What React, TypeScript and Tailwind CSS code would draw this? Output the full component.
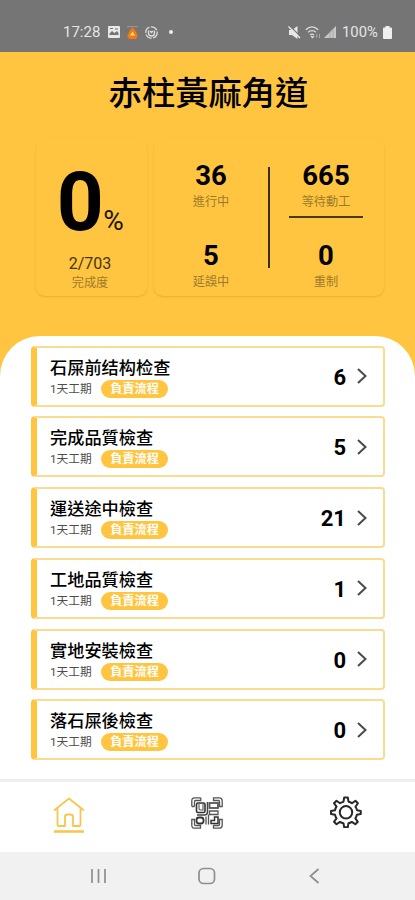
import React from "react";

interface InspectionItem {
  title: string;
  count: number;
}

const inspections: InspectionItem[] = [
  { title: "石屎前结构检查", count: 6 },
  { title: "完成品質檢查", count: 5 },
  { title: "運送途中檢查", count: 21 },
  { title: "工地品質檢查", count: 1 },
  { title: "實地安裝檢查", count: 0 },
  { title: "落石屎後檢查", count: 0 },
];

function StatusBar() {
  return (
    <div className="h-[52px] shrink-0 bg-[#757575] text-[#e4e4e4] flex justify-between pt-[12px] pl-[63px] pr-[23px]">
      <div className="flex items-center h-10 gap-[8px]">
        <span className="w-[37px] text-[15px] whitespace-nowrap">17:28</span>
        {/* Gallery */}
        <svg className="w-[12px] h-[12px]" viewBox="0 0 12 12">
          <rect width="12" height="12" rx="1" fill="#e8e8e8" />
          <path d="M1.5 9V7.5L4 5l2.5 2L9 5l1.5 2v2z" fill="#757575" />
          <path d="M2 2.5h3M7 3h3" stroke="#757575" strokeWidth="1" />
        </svg>
        {/* Orange app */}
        <svg className="w-[11px] h-[13px] -ml-px" viewBox="0 0 11 13">
          <path d="M0 .7h11" stroke="#a99a8c" />
          <path d="M5.5 1.5L8 4 10.7 10 9 13H2L.3 10 3 4z" fill="#f27a1a" />
          <path d="M5.5 5.5L8 9.5H3z" fill="#ffe35a" />
        </svg>
        <svg className="w-[13px] h-[13px] -ml-[1px]" viewBox="0 0 13 13" fill="none" stroke="#e0e0e0" strokeWidth="1.3">
          <circle cx="6.5" cy="6.5" r="5.7" strokeDasharray="7 1.5" />
          <path d="M3.5 4.5v2.5a3 3 0 0 0 6 0V4.5M5 5l1.5 1.5L8 5" />
        </svg>
        <span className="w-[4px] h-[4px] rounded-full bg-[#f1f1f1] ml-[3px]" />
      </div>
      <div className="flex items-center h-10">
        {/* Muted speaker */}
        <svg className="w-[13px] h-[13px]" viewBox="0 0 13 13">
          <path d="M1 4h3l5.5-4v13L4 9H1z" fill="#e8e8e8" />
          <path d="M2 0l11 11" stroke="#757575" strokeWidth="1.2" />
          <path d="M.5 .5l11.5 11.5" stroke="#e8e8e8" strokeWidth="1.4" />
        </svg>
        <svg className="w-[16px] h-[13px] ml-[4px]" viewBox="0 0 16 13" fill="none" stroke="#dcdcdc" strokeWidth="1.3">
          <path d="M.8 3.8Q7-2 13.2 3.8M3 6.3q4-3.3 8 0M5 8.8q2-1.5 4 0" />
          <path d="M6 10l1.5 1.5L9 10" />
          <path d="M11.8 8v4M14.5 8v4" stroke="#aaa" strokeWidth="1" />
        </svg>
        <svg className="w-[12px] h-[12px] ml-[3px]" viewBox="0 0 12 12">
          <path d="M12 0v12H0z" fill="#c8c8c8" />
          <path d="M9 3v9M6 6v6" stroke="#999" strokeWidth=".7" />
        </svg>
        <span className="ml-[6px] w-[37px] text-[14.8px] whitespace-nowrap">100%</span>
        <svg className="w-[9px] h-[13px] ml-[4px]" viewBox="0 0 9 13" fill="#f0f0f0">
          <rect x="2.5" width="4" height="3" />
          <rect y="1.5" width="9" height="11.5" rx="1" />
        </svg>
      </div>
    </div>
  );
}

interface StatProps {
  value: number;
  label: string;
}

function Stat({ value, label }: StatProps) {
  return (
    <div className="flex flex-col items-center">
      <span className="text-[27.5px] leading-[30px] font-bold">{value}</span>
      <span className="text-[12.2px] leading-[16px] mt-[3px] text-[#9c7a2c]">{label}</span>
    </div>
  );
}

function Summary() {
  return (
    <div className="flex gap-[7px] mt-[25px] ml-[35.5px] w-[348px] h-[157px]">
      <div className="w-[111px] rounded-[9px] shadow-[0_1px_2px_rgba(140,90,0,0.22)] flex flex-col items-center">
        <div className="flex items-baseline mt-[19px] h-[88px] gap-[1px]">
          <span className="text-[82px] leading-[88px] font-bold w-[44px] flex justify-center">0</span>
          <span className="text-[28px] leading-none text-[#1c1605]">%</span>
        </div>
        <span className="text-[16px] leading-[18px] mt-[9px] pr-[2px] text-[#443514]">2/703</span>
        <span className="text-[12.2px] leading-[16px] mt-[2px] pr-[2px] text-[#9c7a2c]">完成度</span>
      </div>
      <div className="w-[230px] rounded-[9px] shadow-[0_1px_2px_rgba(140,90,0,0.22)] flex pt-[22px]">
        <div className="w-[115px] flex flex-col gap-[31px]">
          <Stat value={36} label="進行中" />
          <Stat value={5} label="延誤中" />
        </div>
        <div className="w-[2px] h-[101px] mt-[6px] bg-[#3a2d0c] -mx-px" />
        <div className="w-[115px] flex flex-col">
          <Stat value={665} label="等待動工" />
          <div className="h-[2px] w-[74px] mx-auto mt-[6px] mb-[23px] bg-[#4a3a12]" />
          <Stat value={0} label="重制" />
        </div>
      </div>
    </div>
  );
}

function InspectionCard({ title, count }: InspectionItem) {
  return (
    <div className="h-[61px] shrink-0 rounded-[4px] border-2 border-l-[6px] border-[#f9dc8f] border-l-[#ffc540] flex items-center justify-between pl-[13px] pr-[16px]">
      <div className="flex flex-col pt-[3px]">
        <span className="text-[17.2px] leading-[22px] font-medium">{title}</span>
        <div className="flex items-center gap-[10px]">
          <span className="text-[11.7px] leading-[20px] text-[#4c4c4c] w-[41px] whitespace-nowrap">1天工期</span>
          <span className="w-[67px] h-[18px] rounded-full bg-[#ffc540] text-white text-[12.2px] leading-[18px] font-bold text-center">
            負責流程
          </span>
        </div>
      </div>
      <div className="flex items-center gap-[11px]">
        <span className="text-[22px] font-bold leading-none pt-[3px]">{count}</span>
        <svg className="w-[10px] h-[16px]" viewBox="0 0 10 16" fill="none" stroke="#4a4a4a" strokeWidth="2">
          <path d="M1 1l7.5 7L1 15" />
        </svg>
      </div>
    </div>
  );
}

function HomeIcon() {
  return (
    <svg className="w-[32px] h-[36px]" viewBox="0 0 32 36" fill="none" stroke="#f8c64f" strokeWidth="1.8">
      <path
        d="M1 13.5L16 1.5l15 12M4.5 11.5V28q0 1 1 1H12V20q0-2.5 2.5-2.5h3q2.5 0 2.5 2.5v9h6.5q1 0 1-1V11.5"
        strokeLinejoin="round"
      />
      <path d="M1 34.5h30" strokeWidth="2.6" />
    </svg>
  );
}

function QrIcon() {
  return (
    <svg className="w-[32px] h-[32px]" viewBox="0 0 32 32" fill="none" stroke="#555" strokeWidth="1.3">
      {/* Scan frame */}
      <path d="M.8 9.5V3.8q0-3 3-3h6M3.5 9.5V4.5q0-1 1-1h5.3V.8M.8 9.5h2.7" />
      <path d="M22.5 .8h5.7q3 0 3 3v5.7h-2.7v-5q0-1-1-1h-5z" />
      <path d="M31.2 22.5v5.7q0 3-3 3h-5.7v-2.7h5q1 0 1-1v-5z" />
      <path d="M9.5 31.2H3.8q-3 0-3-3v-5.7h2.7v5q0 1 1 1h5z" />
      {/* Code blocks */}
      <rect x="5.5" y="6" width="8.5" height="9.5" rx="1.5" stroke="#333" strokeWidth="1.6" />
      <path d="M8 7v4.500q0 1.500 1.500 1.500H12V7" stroke="#555" strokeWidth="1.1" />
      <rect x="18.5" y="6" width="8.5" height="5" strokeWidth="1.8" />
      <path d="M16.500 5v10q0 3-3 3H6" stroke="#444" strokeWidth="1.5" />
      <path d="M18.500 14H27v3.500h-8.500z" strokeWidth="1.3" />
      <rect x="5.500" y="20.5" width="7" height="6" rx="2.500" stroke="#333" strokeWidth="1.8" />
      <path d="M15 19.500v8M17.500 17.500v10" />
      <path d="M20 26.500v-3h3.500V20H27v6.500z" stroke="#333" strokeWidth="1.5" />
    </svg>
  );
}

function GearIcon() {
  return (
    <svg
      className="w-[32px] h-[32px]"
      viewBox="0 0 32 32"
      fill="none"
      stroke="#282828"
      strokeWidth="2"
      strokeLinejoin="round"
    >
      <path d="M14.2 1.5h3.6l.7 4.2q2 .3 3.5 1.5l3.4-2.5 2.5 2.5-2.4 3.5q1.2 1.800 1.5 3.5l3.8.7v3.2l-3.9.7q-.4 2-1.5 3.6l2.4 3.4-2.5 2.5-3.5-2.4q-1.6 1.1-3.4 1.4l-.6 4h-3.6l-.7-4q-2-.4-3.5-1.4L6.5 28.3 4 25.8l2.5-3.4Q5.4 20.7 5 18.8l-4-.7v-3.2l4-.7q.4-2 1.5-3.5L4 7.2l2.5-2.5L10 7.2q1.6-1.1 3.5-1.5z" />
      <circle cx="16" cy="16.3" r="6.2" />
    </svg>
  );
}

function TabBar() {
  return (
    <div className="h-[73px] shrink-0 bg-white border-t-[3px] border-[#eeeeee] grid grid-cols-3">
      <div className="flex justify-center pt-[15px]">
        <HomeIcon />
      </div>
      <div className="flex justify-center pt-[15px]">
        <QrIcon />
      </div>
      <div className="flex justify-center pt-[14px]">
        <GearIcon />
      </div>
    </div>
  );
}

function SystemNav() {
  return (
    <div className="h-[48px] shrink-0 bg-[#f1f1f1] flex justify-center items-center">
      <svg className="w-[230px] h-[18px] mr-[3px]" viewBox="0 0 230 18" fill="none" stroke="#8e8e8e" strokeWidth="1.7">
        <path d="M1 2v14M7.5 2v14M14 2v14" />
        <rect x="108" y="1.5" width="15.5" height="15" rx="4.5" />
        <path d="M227.5 2l-8 7 8 7" />
      </svg>
    </div>
  );
}

export default function App() {
  return (
    <div className="w-full h-[900px] flex flex-col overflow-hidden bg-[#ffc540] text-black font-[Roboto,'Noto_Sans_CJK_TC',sans-serif]">
      <StatusBar />
      <div className="h-[284px] shrink-0">
        <h1 className="text-center text-[33.3px] leading-[40px] pt-[22px] pl-[2px] font-medium">赤柱黃麻角道</h1>
        <Summary />
      </div>
      <div className="h-[443px] shrink-0 bg-white rounded-t-[40px] flex flex-col gap-[9.8px] pt-[9.5px] pl-[31px] pr-[30px]">
        {inspections.map((item) => (
          <InspectionCard key={item.title} {...item} />
        ))}
      </div>
      <TabBar />
      <SystemNav />
    </div>
  );
}
